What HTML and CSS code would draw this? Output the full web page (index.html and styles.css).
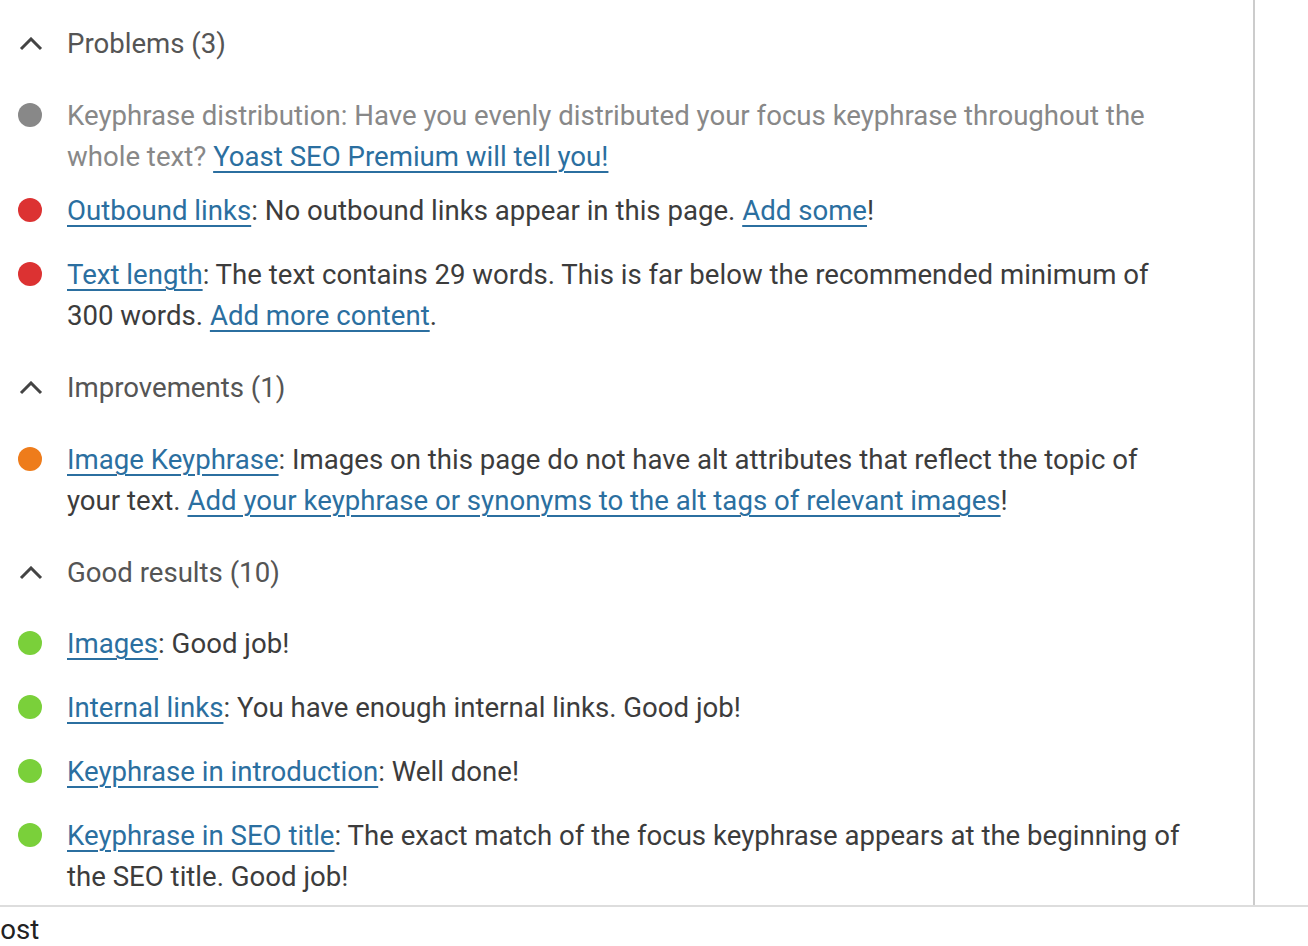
FILE: index.html
```html
<!DOCTYPE html>
<html lang="en">
<head>
<meta charset="utf-8">
<link rel="stylesheet" href="styles.css">
<title>Analysis results</title>
</head>
<body>
<div class="panel">
  <section class="group">
    <div class="group-head">
      <svg class="chev" viewBox="0 0 24 14" width="24" height="14"><path d="M2 12 L12 2 L22 12" fill="none" stroke="#444" stroke-width="3"/></svg>
      <span class="group-title">Problems (3)</span>
    </div>
    <ul class="results">
      <li class="result premium"><span class="dot gray"></span><p class="txt">Keyphrase distribution: Have you evenly distributed your focus keyphrase throughout the whole text? <a href="#">Yoast SEO Premium will tell you!</a></p></li>
      <li class="result"><span class="dot red"></span><p class="txt"><a href="#">Outbound links</a>: No outbound links appear in this page. <a href="#">Add some</a>!</p></li>
      <li class="result"><span class="dot red"></span><p class="txt"><a href="#">Text length</a>: The text contains 29 words. This is far below the recommended minimum of 300 words. <a href="#">Add more content</a>.</p></li>
    </ul>
  </section>
  <section class="group">
    <div class="group-head">
      <svg class="chev" viewBox="0 0 24 14" width="24" height="14"><path d="M2 12 L12 2 L22 12" fill="none" stroke="#444" stroke-width="3"/></svg>
      <span class="group-title">Improvements (1)</span>
    </div>
    <ul class="results">
      <li class="result"><span class="dot orange"></span><p class="txt"><a href="#">Image Keyphrase</a>: Images on this page do not have alt attributes that reflect the topic of your text. <a href="#">Add your keyphrase or synonyms to the alt tags of relevant images</a>!</p></li>
    </ul>
  </section>
  <section class="group">
    <div class="group-head">
      <svg class="chev" viewBox="0 0 24 14" width="24" height="14"><path d="M2 12 L12 2 L22 12" fill="none" stroke="#444" stroke-width="3"/></svg>
      <span class="group-title">Good results (10)</span>
    </div>
    <ul class="results last">
      <li class="result"><span class="dot green"></span><p class="txt"><a href="#">Images</a>: Good job!</p></li>
      <li class="result"><span class="dot green"></span><p class="txt"><a href="#">Internal links</a>: You have enough internal links. Good job!</p></li>
      <li class="result"><span class="dot green"></span><p class="txt"><a href="#">Keyphrase in introduction</a>: Well done!</p></li>
      <li class="result"><span class="dot green"></span><p class="txt"><a href="#">Keyphrase in SEO title</a>: The exact match of the focus keyphrase appears at the beginning of the SEO title. Good job!</p></li>
    </ul>
  </section>
</div>
<div class="footer-row"><span class="footer-label">Post</span></div>
</body>
</html>
```

FILE: styles.css
```css
* { box-sizing: border-box; }
html, body { margin: 0; padding: 0; background: #fff; overflow: hidden; }
body {
  width: 1308px;
  height: 946px;
  font-family: Roboto, "Noto Sans", "Liberation Sans", sans-serif;
  font-size: 27.6px;
  line-height: 41px;
  color: #3c3c3c;
}
.panel {
  width: 1255px;
  height: 905px;
  border-right: 2px solid #ccc;
  padding: 19px 62px 0 0;
}
.group-head {
  height: 50px;
  display: flex;
  align-items: center;
  color: #555;
}
.chev { margin: 0 24px 0 19px; display: block; }
.group-title { line-height: 50px; }
.results {
  list-style: none;
  margin: 26px 0 27px;
  padding: 0;
  display: flex;
  flex-direction: column;
  gap: 23px;
}
.results.last { margin-top: 25px; margin-bottom: 0; }
.result {
  display: flex;
  align-items: flex-start;
  padding-left: 18px;
}
.result.premium { margin-bottom: -10px; }
.result.premium .txt { color: #888; }
.dot {
  flex: none;
  width: 24px;
  height: 24px;
  border-radius: 50%;
  margin-top: 8px;
  margin-right: 25px;
}
.dot.gray { background: #888; }
.dot.red { background: #dc3232; }
.dot.orange { background: #ee7c1b; }
.dot.green { background: #7ad03a; }
.txt { margin: 0; flex: 1; }
.txt a { color: #2b6fa0; text-decoration: underline; text-underline-offset: 5px; text-decoration-thickness: 2px; }
.footer-row {
  border-top: 2px solid #ddd;
  padding-top: 3px;
  color: #222;
  line-height: 40px;
}
.footer-label { display: inline-block; margin-left: -17px; }
```
